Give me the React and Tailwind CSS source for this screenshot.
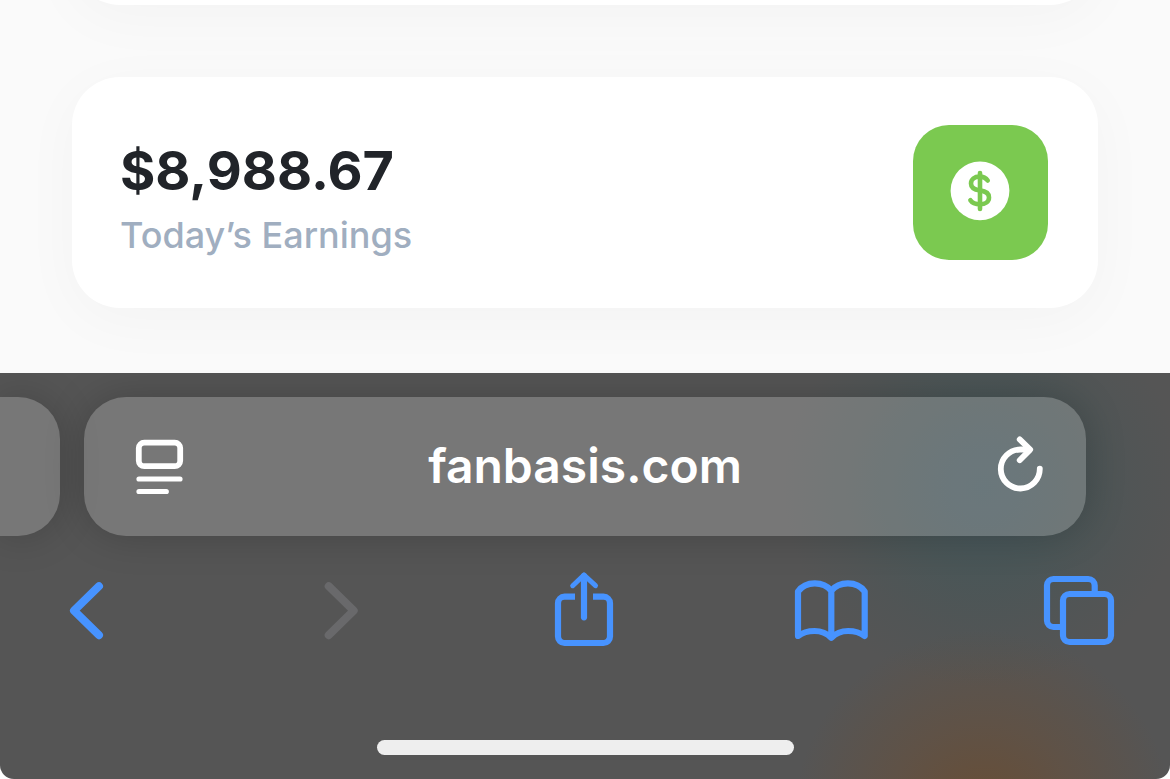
import React from 'react';

const DollarIcon = () => (
    <svg viewBox="0 0 135 135" className="w-full h-full" fill="none" strokeWidth="4.6" strokeLinecap="round" aria-hidden="true">
        <circle cx="67" cy="65.8" r="29.4" fill="white" />
        <g stroke="#7bc950">
            <path d="M67 48V84" />
            <path d="M74.7 55.6C73 53 70.5 51.6 66.5 51.6C61.5 51.6 58 54.3 58 58.4C58 62.5 61 64.6 67 65.4C73 66.2 76 68.4 76 72.4C76 76.6 72.3 79.2 67 79.2C62.5 79.2 59 77.7 57.4 75.2" />
        </g>
    </svg>
);

const ReaderIcon = () => (
    <svg viewBox="0 0 64 64" className="w-16 h-16" fill="none" stroke="white" strokeLinecap="round" aria-hidden="true">
        <rect x="14.8" y="8.6" width="41.4" height="23.6" rx="5.5" strokeWidth="5.8" />
        <path d="M15 45H56M15 57.5H42.3" strokeWidth="5.2" />
    </svg>
);

const ReloadIcon = () => (
    <svg viewBox="0 0 64 64" className="w-16 h-16" fill="none" stroke="white" strokeWidth="5.8" strokeLinecap="round" strokeLinejoin="round" aria-hidden="true">
        <path d="M57.8 34.6A19.5 19.5 0 1 1 38.3 15.5H47" />
        <path d="M37.7 5.4L48.2 15.6L37.7 26.2" />
    </svg>
);

const NavIcon = ({ children, strokeWidth = 6.2 }) => (
    <svg viewBox="0 0 80 80" className="w-20 h-20" fill="none" stroke="currentColor" strokeWidth={strokeWidth} strokeLinejoin="round" aria-hidden="true">
        {children}
    </svg>
);

const navItems = [
    {
        label: 'Back',
        icon: (
            <NavIcon strokeWidth={8}>
                <path d="M52 16.2L27 40.6L52 65.2" strokeLinecap="round" />
            </NavIcon>
        ),
    },
    {
        label: 'Forward',
        disabled: true,
        icon: (
            <NavIcon strokeWidth={8}>
                <path d="M33.7 16.2L58.7 40.6L33.7 65.2" strokeLinecap="round" />
            </NavIcon>
        ),
    },
    {
        label: 'Share',
        icon: (
            <NavIcon>
                <path d="M32 26.7H21.5A6.5 6.5 0 0 0 15 33.2V66.5A6.5 6.5 0 0 0 21.5 73H60.5A6.5 6.5 0 0 0 67 66.5V33.2A6.5 6.5 0 0 0 60.5 26.7H50" />
                <path d="M41 6V47.3" strokeLinecap="round" />
                <path d="M29.7 15.7L41 5L52.5 15.7" strokeWidth="5" strokeLinecap="round" />
            </NavIcon>
        ),
    },
    {
        label: 'Bookmarks',
        icon: (
            <NavIcon>
                <path d="M40.3 20.7C36.5 16 30.5 13.3 23.8 13.3C16.5 13.3 10.5 16.5 7 21.5V66C11.5 62.6 17.3 61 23.5 61C30 61 36 63.4 40.3 67.8C44.6 63.4 50.6 61 57.1 61C63.3 61 69.2 62.6 73.7 66V21.5C70.2 16.5 64.2 13.3 56.9 13.3C50.2 13.3 44.1 16 40.3 20.7ZM40.3 20.7V67.8" />
            </NavIcon>
        ),
    },
    {
        label: 'Tabs',
        icon: (
            <NavIcon>
                <path d="M22 57H14.5A6.5 6.5 0 0 1 8 50.5V15.5A6.5 6.5 0 0 1 14.5 9H49.2A6.5 6.5 0 0 1 55.7 15.5V22" />
                <rect x="24" y="24" width="48" height="48" rx="6.5" />
            </NavIcon>
        ),
    },
];

const Card = ({ children }) => (
    <section className="flex items-center justify-between min-h-[231px] pl-12 pr-[50px] py-12 bg-white rounded-[48px] shadow-[0_12px_60px_rgba(0,0,0,0.03)]">
        {children}
    </section>
);

const AddressBar = () => (
    <div className="flex gap-6 pt-6 pr-[84px]">
        <div className="w-[60px] flex-shrink-0 bg-white/20 rounded-r-[42px] shadow-[0_0_40px_rgba(0,0,0,0.2)]" />
        <div className="flex flex-1 min-w-0 items-center px-10 pt-[37px] pb-[38px] bg-white/20 rounded-[42px] shadow-[0_0_40px_rgba(0,0,0,0.2)]">
            <button type="button" aria-label="Page menu" className="flex-shrink-0">
                <ReaderIcon />
            </button>
            <input
                type="text"
                aria-label="Address"
                defaultValue="fanbasis.com"
                className="flex-1 min-w-0 h-16 bg-transparent text-center text-[48px] leading-[64px] font-semibold text-white outline-none"
            />
            <button type="button" aria-label="Reload" className="flex-shrink-0">
                <ReloadIcon />
            </button>
        </div>
    </div>
);

const App = () => (
    <div className="flex flex-col min-h-screen bg-white font-['Inter','Liberation_Sans',sans-serif]">
        <main className="flex flex-col gap-[72px] px-[72px] pb-[65px] overflow-hidden bg-[#fafafa]">
            <div className="-mt-[226px]">
                <Card />
            </div>
            <Card>
                <div className="flex flex-col gap-3 pt-3">
                    <h2 className="text-[54px] leading-[60px] font-bold text-[#212429]">$8,988.67</h2>
                    <p className="text-[36px] leading-[44px] font-medium text-[#a0aec0]">Today’s Earnings</p>
                </div>
                <div className="w-[135px] h-[135px] flex-shrink-0 bg-[#7bc950] rounded-[36px]">
                    <DollarIcon />
                </div>
            </Card>
        </main>

        <footer className="flex flex-col flex-1 overflow-hidden rounded-b-[14px] bg-[#555555] bg-[radial-gradient(circle_200px_at_84%_28%,rgba(60,87,95,0.65)_0%,rgba(60,87,90,0.45)_40%,rgba(64,85,88,0.18)_75%,rgba(64,85,88,0)_100%),radial-gradient(circle_190px_at_84%_110%,rgba(108,76,46,0.85)_0%,rgba(108,78,52,0.45)_50%,rgba(108,78,60,0)_100%)]">
            <AddressBar />
            <nav className="flex justify-between pt-[34px] pl-[47px] pr-[51px]">
                {navItems.map((item) => (
                    <button
                        key={item.label}
                        type="button"
                        aria-label={item.label}
                        disabled={item.disabled}
                        className="text-[#4793ff] disabled:text-[#69696b]"
                    >
                        {item.icon}
                    </button>
                ))}
            </nav>
            <div className="w-[417px] h-[15px] mt-auto mb-6 self-center rounded-full bg-[#eeeeee]" />
        </footer>
    </div>
);

export default App;
